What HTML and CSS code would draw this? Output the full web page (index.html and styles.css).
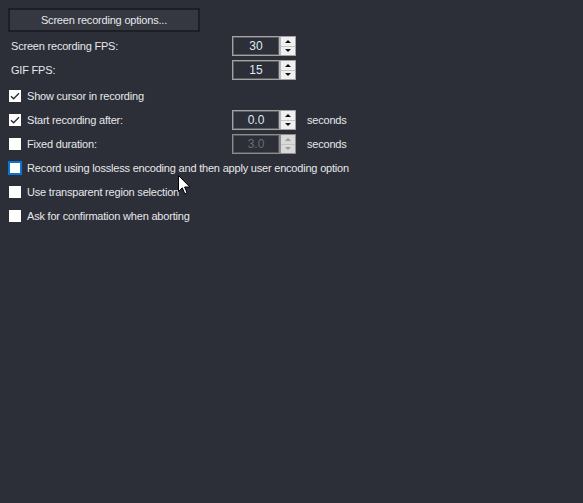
FILE: index.html
```html
<!DOCTYPE html>
<html>
<head>
<meta charset="utf-8">
<link rel="stylesheet" href="styles.css">
</head>
<body>
<div class="panel">
  <button class="opt-btn">Screen recording options...</button>
  <div class="rows-top">
    <div class="row">
      <span class="label plain">Screen recording FPS:</span>
      <div class="spin"><div class="spin-val">30</div><div class="spin-btns"><span class="up"></span><span class="down"></span></div></div>
    </div>
    <div class="row">
      <span class="label plain">GIF FPS:</span>
      <div class="spin"><div class="spin-val">15</div><div class="spin-btns"><span class="up"></span><span class="down"></span></div></div>
    </div>
  </div>
  <div class="rows">
    <div class="row">
      <span class="cb checked"><svg viewBox="0 0 12 12" width="12" height="12"><path d="M2 6.2 L4.6 8.8 L10 3.2" fill="none" stroke="#2c2f37" stroke-width="1.4"/></svg></span>
      <span class="cb-label">Show cursor in recording</span>
    </div>
    <div class="row">
      <span class="cb checked"><svg viewBox="0 0 12 12" width="12" height="12"><path d="M2 6.2 L4.6 8.8 L10 3.2" fill="none" stroke="#2c2f37" stroke-width="1.4"/></svg></span>
      <span class="cb-label wide">Start recording after:</span>
      <div class="spin"><div class="spin-val">0.0</div><div class="spin-btns"><span class="up"></span><span class="down"></span></div></div>
      <span class="unit">seconds</span>
    </div>
    <div class="row">
      <span class="cb"></span>
      <span class="cb-label wide">Fixed duration:</span>
      <div class="spin disabled"><div class="spin-val">3.0</div><div class="spin-btns"><span class="up"></span><span class="down"></span></div></div>
      <span class="unit">seconds</span>
    </div>
    <div class="row">
      <span class="cb focus"></span>
      <span class="cb-label">Record using lossless encoding and then apply user encoding option</span>
    </div>
    <div class="row">
      <span class="cb"></span>
      <span class="cb-label">Use transparent region selection</span>
    </div>
    <div class="row">
      <span class="cb"></span>
      <span class="cb-label">Ask for confirmation when aborting</span>
    </div>
  </div>
  <svg class="cursor" width="13" height="21" viewBox="0 0 13 21"><path d="M0.5 0.5 L0.5 16.5 L4.3 12.8 L6.8 18.8 L9 17.8 L6.6 12 L11.8 12 Z" fill="#fff" stroke="#000" stroke-width="1"/></svg>
</div>
</body>
</html>
```
FILE: styles.css
```css
html, body {
  margin: 0;
  padding: 0;
  background: #2c2f37;
  width: 583px;
  height: 503px;
  overflow: hidden;
}
.panel {
  position: relative;
  padding: 8px 0 0 0;
  font-family: "Liberation Sans", Arial, sans-serif;
  font-size: 11px;
  letter-spacing: -0.2px;
  color: #e6e8ec;
}
.opt-btn {
  display: block;
  margin-left: 8px;
  width: 192px;
  height: 24px;
  box-sizing: border-box;
  border: 2px solid #1d1f24;
  background: #353841;
  color: #e6e8ec;
  font-family: inherit;
  font-size: 11px;
  letter-spacing: -0.2px;
  padding: 0;
}
.rows-top {
  margin-top: 2px;
}
.rows {
  margin-top: 2px;
}
.row {
  display: flex;
  align-items: center;
  height: 24px;
}
.label.plain {
  width: 221px;
  padding-left: 11px;
}
.cb {
  width: 12px;
  height: 12px;
  margin-left: 9px;
  background: #fff;
  box-sizing: border-box;
  display: flex;
  align-items: center;
  justify-content: center;
  flex: none;
}
.cb.focus {
  width: 14px;
  height: 14px;
  margin-left: 8px;
  border: 2px solid #0a74d6;
}
.cb-label {
  margin-left: 6px;
}
.cb.focus + .cb-label {
  margin-left: 5px;
}
.cb-label.wide {
  width: 205px;
}
.spin {
  display: flex;
  width: 64px;
  height: 20px;
  box-sizing: border-box;
  border: 1px solid #a3a3a3;
  background: #b8b8b8;
  flex: none;
}
.spin-val {
  width: 46px;
  box-sizing: border-box;
  border: 1px solid #5c5e62;
  background: #2c2f37;
  color: #dfe9f5;
  text-align: center;
  line-height: 16px;
  font-size: 12px;
  letter-spacing: 0;
}
.spin-btns {
  margin-left: 2px;
  width: 14px;
  display: flex;
  flex-direction: column;
  background: #f0f0f0;
}
.spin-btns span {
  flex: 1;
  position: relative;
  display: block;
}
.spin-btns .up {
  border-bottom: 1px solid #c4c4c4;
}
.spin-btns .up::after,
.spin-btns .down::after {
  content: "";
  position: absolute;
  left: 4px;
  border-left: 3px solid transparent;
  border-right: 3px solid transparent;
}
.spin-btns .up::after {
  top: 3px;
  border-bottom: 3px solid #111;
}
.spin-btns .down::after {
  top: 2px;
  border-top: 3px solid #111;
}
.spin.disabled {
  border-color: #8c8c8c;
  background: #8c8c8c;
}
.spin.disabled .spin-val {
  color: #6a6d72;
  border-color: #55575b;
}
.spin.disabled .spin-btns {
  background: #d9d9d9;
}
.spin.disabled .up::after {
  border-bottom-color: #9a9a9a;
}
.spin.disabled .down::after {
  border-top-color: #9a9a9a;
}
.unit {
  margin-left: 11px;
}
.cursor {
  position: absolute;
  left: 178px;
  top: 175px;
}
```
